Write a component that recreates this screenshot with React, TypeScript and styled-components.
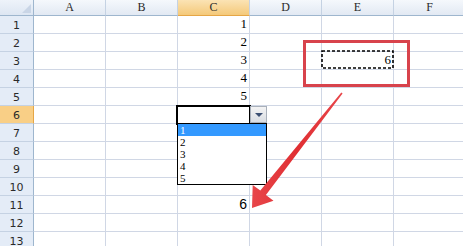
import React from "react";
import styled, { createGlobalStyle } from "styled-components";

const columns = ["A", "B", "C", "D", "E", "F"];
const rowCount = 13;

// values typed into the sheet, keyed by row then column
const values: Record<number, Record<string, string>> = {
	1: { C: "1" },
	2: { C: "2" },
	3: { C: "3", E: "6" },
	4: { C: "4" },
	5: { C: "5" },
	11: { C: "6" },
};

const listOptions = ["1", "2", "3", "4", "5"];

// the open validation list that hangs off the active cell
const Dropdown = () => (
	<>
		<ActiveFrame />
		<DropButton>
			<DropArrow />
		</DropButton>
		<ListBox>
			{listOptions.map((o, i) => (
				<ListItem key={o} $selected={i === 0}>
					{o}
				</ListItem>
			))}
		</ListBox>
	</>
);

// copied cell with its marching ants and the red highlight box
const CopiedMark = () => (
	<>
		<Marquee>
			<svg width="73" height="19" viewBox="0 0 73 19">
				<rect
					x="1"
					y="1"
					width="71"
					height="17"
					fill="none"
					stroke="#000"
					strokeWidth="1.6"
					strokeDasharray="3 2"
				/>
			</svg>
		</Marquee>
		<Callout />
	</>
);

const overlays: Record<string, React.ReactNode> = {
	C6: <Dropdown />,
	E3: <CopiedMark />,
};

const Sheet = () => {
	const rows = Array.from({ length: rowCount }, (_, i) => i + 1);

	return (
		<Page>
			<GlobalStyle />
			<Grid>
				<Corner>
					<CornerMark />
				</Corner>
				{columns.map((c) => (
					<ColHeader key={c} $active={c === "C"}>
						{c}
					</ColHeader>
				))}
				{rows.map((r) => (
					<React.Fragment key={r}>
						<RowHeader $active={r === 6}>{r}</RowHeader>
						{columns.map((c) => (
							<Cell key={c} $sans={r === 11} $raised={!!overlays[c + r]}>
								{values[r]?.[c] ?? ""}
								{overlays[c + r]}
							</Cell>
						))}
					</React.Fragment>
				))}
			</Grid>

			<Arrow width="463" height="246" viewBox="0 0 463 246">
				<defs>
					<linearGradient id="arrowFill" x1="0" y1="0" x2="1" y2="0">
						<stop offset="0" stopColor="#e8464a" />
						<stop offset="0.5" stopColor="#e02f33" />
						<stop offset="1" stopColor="#e8464a" />
					</linearGradient>
				</defs>
				<polygon
					points="341.3,92.6 260.3,190.6 252.7,185.0 252,208 273.5,200.8 265.9,195 342.6,93.4"
					fill="url(#arrowFill)"
				/>
			</Arrow>
		</Page>
	);
};

const GlobalStyle = createGlobalStyle`
	html, body {
		margin: 0;
		padding: 0;
		background: #ffffff;
		overflow: hidden;
	}
`;

const Page = styled.div`
	position: relative;
	width: 463px;
	height: 246px;
	overflow: hidden;
	background: #ffffff;
`;

const Grid = styled.div`
	display: grid;
	grid-template-columns: 34px repeat(6, 72px);
	grid-template-rows: 16px;
	grid-auto-rows: 18px;
`;

const Corner = styled.div`
	position: relative;
	box-sizing: border-box;
	background: linear-gradient(#eef3fa, #dde6f2);
	border-right: 1px solid #9eb6ce;
	border-bottom: 1px solid #9eb6ce;
`;

const CornerMark = styled.div`
	position: absolute;
	right: 2px;
	bottom: 2px;
	width: 0;
	height: 0;
	border-left: 9px solid transparent;
	border-bottom: 9px solid #c9d5e6;
`;

const ColHeader = styled.div<{ $active?: boolean }>`
	box-sizing: border-box;
	display: flex;
	align-items: center;
	justify-content: center;
	font-family: "Liberation Serif", serif;
	font-size: 12px;
	color: #2a2a2a;
	background: ${(p) =>
		p.$active
			? "linear-gradient(#fbe3b4, #f4c97a)"
			: "linear-gradient(#f5f8fc, #e2e9f3)"};
	border-right: 1px solid #c5d2e3;
	border-bottom: 1px solid ${(p) => (p.$active ? "#e5a646" : "#9eb6ce")};
`;

const RowHeader = styled.div<{ $active?: boolean }>`
	box-sizing: border-box;
	display: flex;
	align-items: center;
	justify-content: center;
	padding-top: 1px;
	font-family: "DejaVu Sans", sans-serif;
	font-size: 11px;
	color: #2a2a2a;
	background: ${(p) => (p.$active ? "#f9cf86" : "#e4ecf7")};
	border-right: 1px solid ${(p) => (p.$active ? "#e5a646" : "#9eb6ce")};
	border-bottom: 1px solid #c5d2e3;
`;

const Cell = styled.div<{ $sans?: boolean; $raised?: boolean }>`
	position: relative;
	z-index: ${(p) => (p.$raised ? 2 : "auto")};
	box-sizing: border-box;
	display: flex;
	align-items: flex-end;
	justify-content: flex-end;
	padding: 0 2px 1px 0;
	font-family: ${(p) =>
		p.$sans ? '"Liberation Sans", sans-serif' : '"Liberation Serif", serif'};
	font-size: ${(p) => (p.$sans ? "14px" : "13px")};
	line-height: 16px;
	color: #000;
	border-right: 1px solid #d0d7e5;
	border-bottom: 1px solid #d0d7e5;
`;

const ActiveFrame = styled.div`
	position: absolute;
	left: -2px;
	top: -1px;
	width: 75px;
	height: 20px;
	box-sizing: border-box;
	border: 2px solid #000;
`;

const DropButton = styled.div`
	position: absolute;
	left: 72px;
	top: 0;
	width: 17px;
	height: 17px;
	box-sizing: border-box;
	display: flex;
	align-items: center;
	justify-content: center;
	background: linear-gradient(#f4f4f4, #d9dde3);
	border: 1px solid #a9b0ba;
`;

const DropArrow = styled.div`
	width: 0;
	height: 0;
	margin-top: 1px;
	border-left: 4px solid transparent;
	border-right: 4px solid transparent;
	border-top: 4px solid #3b4f72;
`;

const ListBox = styled.div`
	position: absolute;
	left: -1px;
	top: 17px;
	width: 90px;
	height: 62px;
	box-sizing: border-box;
	display: flex;
	flex-direction: column;
	background: #ffffff;
	border: 1px solid #000;
`;

const ListItem = styled.div<{ $selected?: boolean }>`
	height: 12px;
	padding-left: 2px;
	font-family: "Liberation Serif", serif;
	font-size: 11px;
	line-height: 12px;
	text-align: left;
	color: ${(p) => (p.$selected ? "#ffffff" : "#000")};
	background: ${(p) => (p.$selected ? "#3399ff" : "transparent")};
`;

const Marquee = styled.div`
	position: absolute;
	left: -1px;
	top: -2px;
	width: 73px;
	height: 19px;
	display: flex;
	pointer-events: none;
`;

const Callout = styled.div`
	position: absolute;
	left: -19px;
	top: -12px;
	width: 107px;
	height: 47px;
	box-sizing: border-box;
	border: 3px solid #d8434c;
	pointer-events: none;
`;

const Arrow = styled.svg`
	position: absolute;
	left: 0;
	top: 0;
	z-index: 3;
	pointer-events: none;
`;

export default Sheet;
